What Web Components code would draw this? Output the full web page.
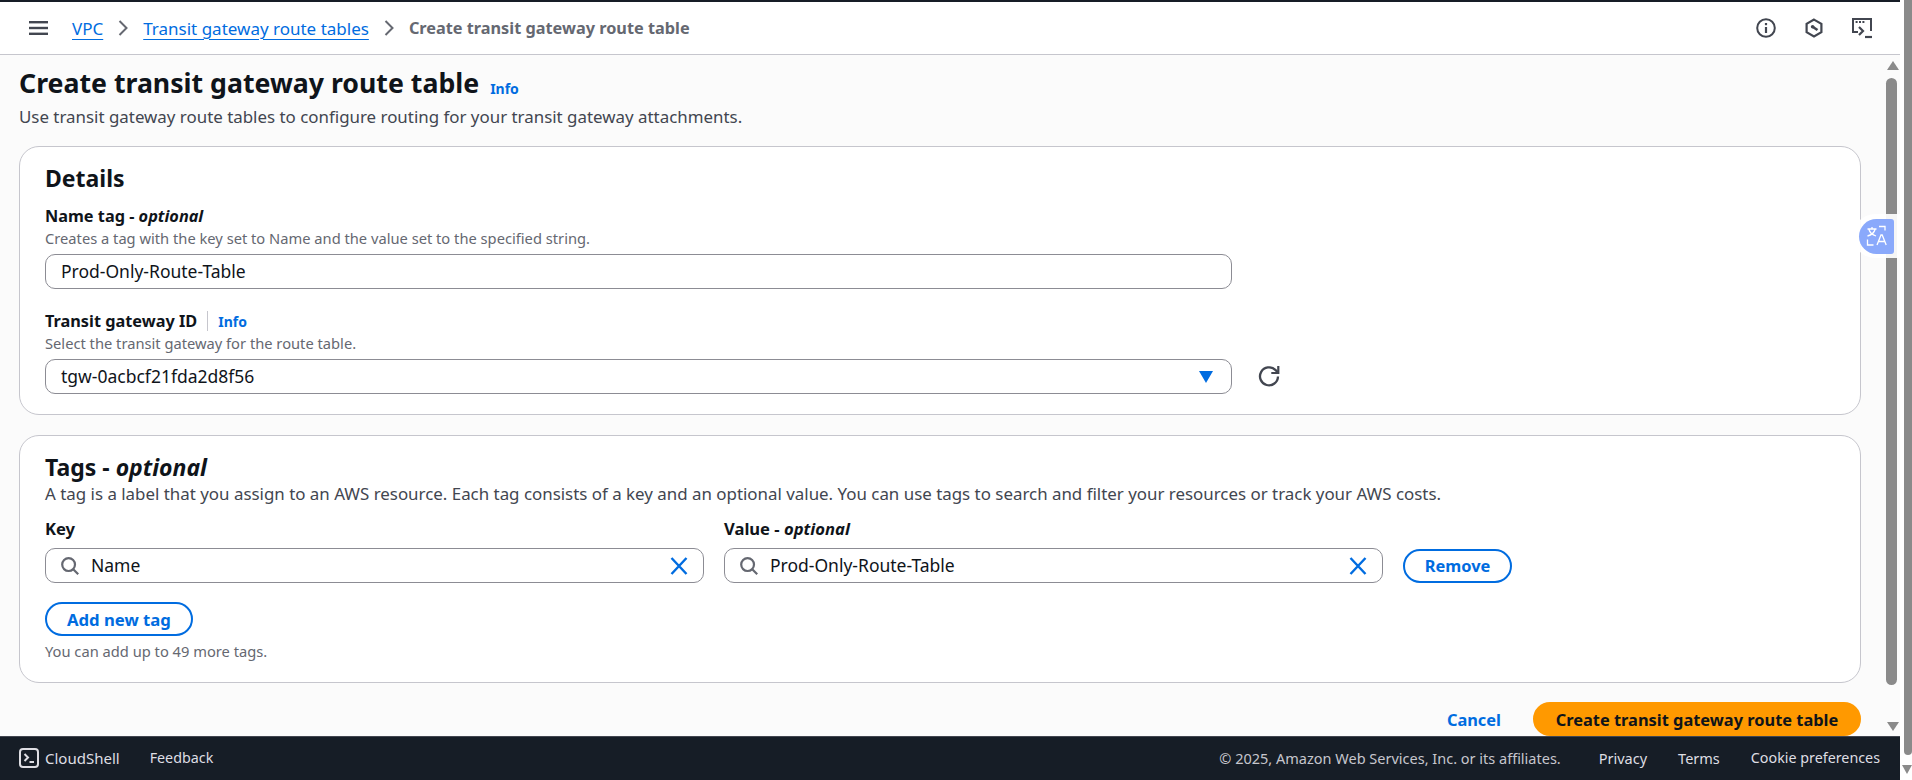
<!DOCTYPE html>
<html>
<head>
<meta charset="utf-8">
<title>Create transit gateway route table</title>
<style>
  html, body { margin: 0; height: 100%; overflow: hidden; background: #fff; }
  body {
    font-family: "Noto Sans", "Liberation Sans", sans-serif;
    font-size: 16px;
    color: #0f141a;
    display: grid;
    grid-template-columns: 1fr 12px;
    height: 780px;
  }
  app-shell { min-width: 0; }
</style>
</head>
<body>
<app-shell>
  <top-bar slot="top"></top-bar>
  <page-head></page-head>

  <form-card>
    <card-title>Details</card-title>
    <form-field label="Name tag" optional desc="Creates a tag with the key set to Name and the value set to the specified string." first>
      <text-box value="Prod-Only-Route-Table" style="width:1187px"></text-box>
    </form-field>
    <form-field label="Transit gateway ID" info desc="Select the transit gateway for the route table.">
      <div style="display:flex;align-items:center;gap:26px">
        <text-box value="tgw-0acbcf21fda2d8f56" caret style="width:1187px"></text-box>
        <svg width="22" height="22" viewBox="0 0 22 22" fill="none" stroke="#424650" stroke-width="2.3" style="margin-top:-2px">
          <path d="M20 11.500a9 9 0 1 1-2.700-6.600l2.400 2.300"/><path d="M20.300 1v7h-7" stroke-width="2.200"/>
        </svg>
      </div>
    </form-field>
  </form-card>

  <form-card second>
    <card-title>Tags - <i>optional</i></card-title>
    <card-desc>A tag is a label that you assign to an AWS resource. Each tag consists of a key and an optional value. You can use tags to search and filter your resources or track your AWS costs.</card-desc>
    <tag-row></tag-row>
    <aws-button style="margin-top:19px;font-size:16.700px">Add new tag</aws-button>
    <help-text>You can add up to 49 more tags.</help-text>
  </form-card>

  <form-actions></form-actions>
  <console-footer slot="footer"></console-footer>
  <translate-tab></translate-tab>
</app-shell>
<outer-scroll></outer-scroll>

<script>
// page frame: dark strip, breadcrumb bar, scrolling main area with its own bar, footer
class AppShell extends HTMLElement {
  constructor() {
    super()
    this.attachShadow({ mode: 'open' }).innerHTML = `
    <style>
      :host { display: flex; flex-direction: column; height: 780px; position: relative; }
      .strip { height: 2px; background: #161d26; flex: none; }
      .main { flex: 1; min-height: 0; display: flex; background: #fbfbfb; overflow: hidden; }
      .scroller { flex: 1; min-width: 0; padding: 0 24px 0 19px; }
      .bar { width: 15px; flex: none; display: flex; flex-direction: column; align-items: center; background: #fbfbfb; }
      .up { margin-top: 6px; border: 6px solid transparent; border-top: 0; border-bottom: 9px solid #8a8a8a; }
      .thumb { margin-top: 8px; width: 11px; height: 607px; border-radius: 6px; background: #8a8a8a; margin-left: -3px; }
      .down { margin-top: 37px; border: 6px solid transparent; border-bottom: 0; border-top: 9px solid #8a8a8a; }
    </style>
    <slot name="top"></slot>
    <div class="strip" style="order:-1"></div>
    <div class="main">
      <div class="scroller"><slot></slot></div>
      <div class="bar"><div class="up"></div><div class="thumb"></div><div class="down"></div></div>
    </div>
    <slot name="footer"></slot>`
  }
}

class TopBar extends HTMLElement {
  constructor() {
    super()
    this.attachShadow({ mode: 'open' }).innerHTML = `
    <style>
      :host { display: flex; align-items: center; height: 52px; background: #fff; border-bottom: 1px solid #c6c6cd; padding: 0 27px 0 29px; flex: none; font-size: 17px; }
      a { color: #006ce0; text-decoration: underline; text-underline-offset: 4px; text-decoration-thickness: 1px; }
      .menu { margin-right: 24px; display: block; }
      .chev { margin: 0 15px; display: block; }
      .cur { color: #656871; font-weight: 700; font-size: 16.300px; }
      .right { margin-left: auto; display: flex; gap: 27px; align-items: center; }
      svg { flex: none; }
    </style>
    <svg class="menu" width="19" height="14" viewBox="0 0 19 14" fill="#424650"><rect width="19" height="2.4"/><rect y="5.8" width="19" height="2.4"/><rect y="11.6" width="19" height="2.4"/></svg>
    <a>VPC</a>
    <svg class="chev" width="10" height="16" viewBox="0 0 10 16" fill="none" stroke="#656871" stroke-width="2"><path d="M1.5 1l7 7-7 7"/></svg>
    <a>Transit gateway route tables</a>
    <svg class="chev" width="10" height="16" viewBox="0 0 10 16" fill="none" stroke="#656871" stroke-width="2"><path d="M1.5 1l7 7-7 7"/></svg>
    <span class="cur">Create transit gateway route table</span>
    <div class="right">
      <svg style="margin-right:1px" width="20" height="20" viewBox="0 0 20 20" fill="none" stroke="#424650" stroke-width="2"><circle cx="10" cy="10" r="8.8"/><path d="M10 9v6" stroke-width="2.2"/><path d="M10 5v2.2" stroke-width="2.2"/></svg>
      <svg width="20" height="20" viewBox="0 0 20 20" fill="none" stroke="#424650" stroke-width="2.2"><path d="M10 1.6l7.4 4.2v8.4L10 18.4l-7.4-4.2V5.800z"/><path d="M9 9l4.5 3" stroke-width="2.6"/><circle cx="8.6" cy="8.8" r="1.8" fill="#424650" stroke="none"/></svg>
      <svg width="22" height="22" viewBox="0 0 22 22" fill="none" stroke="#424650" stroke-width="2"><path d="M7 15H2V2h18v12"/><path d="M4.6 5h2M8 5h2M11.4 5h2" stroke-width="2"/><path d="M8 10l4 4-4 4" stroke-width="2.2"/><path d="M14 20h7" stroke-width="2.2"/></svg>
    </div>`
  }
}

class PageHead extends HTMLElement {
  constructor() {
    super()
    this.attachShadow({ mode: 'open' }).innerHTML = `
    <style>
      :host { display: block; padding-top: 10px; }
      .row { display: flex; align-items: baseline; gap: 11px; }
      h1 { margin: 0; font-size: 26.700px; line-height: 36px; font-weight: 700; color: #0f141a; }
      a { font-size: 14px; font-weight: 700; color: #006ce0; transform: translateY(1px); }
      p { margin: 4px 0 0; font-size: 16.900px; line-height: 24px; color: #424650; }
    </style>
    <div class="row"><h1>Create transit gateway route table</h1><a>Info</a></div>
    <p>Use transit gateway route tables to configure routing for your transit gateway attachments.</p>`
  }
}

class FormCard extends HTMLElement {
  constructor() {
    super()
    this.attachShadow({ mode: 'open' }).innerHTML = `
    <style>
      :host { display: block; margin-top: 17px; background: #fff; border: 1px solid #c6c6cd; border-radius: 20px; padding: 17px 24px 20px 25px; }
      :host([second]) { margin-top: 20px; padding-bottom: 23px; }
    </style>
    <slot></slot>`
  }
}

class CardTitle extends HTMLElement {
  constructor() {
    super()
    this.attachShadow({ mode: 'open' }).innerHTML = `
    <style>:host { display: block; font-size: 23px; line-height: 28px; font-weight: 700; color: #0f141a; }</style>
    <slot></slot>`
  }
}

class CardDesc extends HTMLElement {
  constructor() {
    super()
    this.attachShadow({ mode: 'open' }).innerHTML = `
    <style>:host { display: block; margin-top: 2px; font-size: 16.900px; line-height: 22px; color: #424650; }</style>
    <slot></slot>`
  }
}

class HelpText extends HTMLElement {
  constructor() {
    super()
    this.attachShadow({ mode: 'open' }).innerHTML = `
    <style>:host { display: block; margin-top: 7px; font-size: 14.700px; line-height: 16px; color: #656871; }</style>
    <slot></slot>`
  }
}

class FormField extends HTMLElement {
  constructor() {
    super()
    const label = this.getAttribute('label')
    const opt = this.hasAttribute('optional') ? ' - <i>optional</i>' : ''
    const info = this.hasAttribute('info') ? '<span class="sep"></span><a>Info</a>' : ''
    this.attachShadow({ mode: 'open' }).innerHTML = `
    <style>
      :host { display: block; margin-top: 21px; }
      :host([first]) { margin-top: 13px; }
      .lab { display: flex; align-items: center; height: 22px; font-size: 16.300px; line-height: 22px; font-weight: 700; color: #0f141a; white-space: pre; }
      .sep { width: 1px; height: 20px; background: #c6c6cd; margin: 0 10px; }
      a { color: #006ce0; font-size: 14px; transform: translateY(1px); }
      .desc { margin: 2px 0 7px; font-size: 14.700px; line-height: 18px; color: #656871; }
    </style>
    <div class="lab"><span>${label}${opt}</span>${info}</div>
    <div class="desc">${this.getAttribute('desc')}</div>
    <slot></slot>`
  }
}

class TextBox extends HTMLElement {
  constructor() {
    super()
    const caret = this.hasAttribute('caret') ? '<svg class="end" width="16" height="12" viewBox="0 0 16 12" fill="#006ce0"><path d="M1 0h14L8 12z"/></svg>' : ''
    const search = this.hasAttribute('search') ? '<svg class="s" width="20" height="20" viewBox="0 0 20 20" fill="none" stroke="#656871" stroke-width="2.2"><circle cx="8.6" cy="8.6" r="6.4"/><path d="M13.2 13.2l5 5"/></svg>' : ''
    const clear = this.hasAttribute('clear') ? '<svg class="end x" width="18" height="18" viewBox="0 0 18 18" fill="none" stroke="#006ce0" stroke-width="2.4"><path d="M1.5 1l15 16M16.5 1l-15 16"/></svg>' : ''
    this.attachShadow({ mode: 'open' }).innerHTML = `
    <style>
      :host { display: flex; align-items: center; box-sizing: border-box; height: 35px; background: #fff; border: 1px solid #8c8c94; border-radius: 10px; padding: 0 17px 0 15px; font-size: 17.500px; color: #0f141a; flex: none; }
      :host([search]) { padding: 0 15px 0 14px; }
      span { margin-top: -2px; }
      .s { margin-right: 11px; }
      .end { margin-left: auto; }
      svg { flex: none; }
    </style>
    ${search}<span>${this.getAttribute('value')}</span>${caret}${clear}`
  }
}

class AwsButton extends HTMLElement {
  constructor() {
    super()
    this.attachShadow({ mode: 'open' }).innerHTML = `
    <style>
      :host { display: inline-flex; align-items: center; justify-content: center; box-sizing: border-box; height: 34px; padding: 0 20px; border: 2px solid #006ce0; border-radius: 20px; background: #fff; color: #006ce0; font-size: 16.400px; font-weight: 700; flex: none; }
      :host([primary]) { background: #ff9900; border-color: #ff9900; color: #0f141a; }
      :host([plain]) { background: none; border-color: transparent; }
    </style>
    <slot></slot>`
  }
}

class TagRow extends HTMLElement {
  constructor() {
    super()
    this.attachShadow({ mode: 'open' }).innerHTML = `
    <style>
      :host { display: grid; grid-template-columns: 659px 659px 109px; column-gap: 20px; row-gap: 8px; margin-top: 13px; align-items: center; }
      .lab { font-size: 16.600px; line-height: 22px; font-weight: 700; color: #0f141a; }
    </style>
    <div class="lab">Key</div>
    <div class="lab">Value - <i>optional</i></div>
    <div></div>
    <text-box search clear value="Name"></text-box>
    <text-box search clear value="Prod-Only-Route-Table"></text-box>
    <aws-button>Remove</aws-button>`
  }
}

class FormActions extends HTMLElement {
  constructor() {
    super()
    this.attachShadow({ mode: 'open' }).innerHTML = `
    <style>:host { display: flex; justify-content: flex-end; align-items: center; gap: 10px; margin-top: 19px; }</style>
    <aws-button plain>Cancel</aws-button>
    <aws-button primary style="width:328px">Create transit gateway route table</aws-button>`
  }
}

class ConsoleFooter extends HTMLElement {
  constructor() {
    super()
    this.attachShadow({ mode: 'open' }).innerHTML = `
    <style>
      :host { display: flex; align-items: center; flex: none; box-sizing: border-box; height: 44px; background: #161d26; border-top: 1px solid #424650; padding: 0 20px 2px 19px; color: #dedee3; font-size: 14.500px; }
      svg { margin-right: 6px; flex: none; }
      .cs { font-size: 15px; }
      .fb { margin-left: 30px; font-size: 14.300px; }
      .right { margin-left: auto; display: flex; gap: 31px; }
      .copy { margin-right: 7px; color: #c6c6cd; }
      .ck { font-size: 14.300px; }
    </style>
    <svg width="20" height="20" viewBox="0 0 20 20" fill="none" stroke="#dedee3" stroke-width="2"><rect x="1" y="1" width="18" height="18" rx="3"/><path d="M5.5 6l3.5 3.5-3.5 3.5" /><path d="M10.5 14h4.5"/></svg>
    <span class="cs">CloudShell</span>
    <span class="fb">Feedback</span>
    <div class="right">
      <span class="copy">© 2025, Amazon Web Services, Inc. or its affiliates.</span>
      <span>Privacy</span><span>Terms</span><span class="ck">Cookie preferences</span>
    </div>`
  }
}

// browser extension tab that sits over the page edge
class TranslateTab extends HTMLElement {
  constructor() {
    super()
    this.attachShadow({ mode: 'open' }).innerHTML = `
    <style>
      :host { position: absolute; left: 1853px; top: 214px; width: 47px; height: 44px; background: rgba(255,255,255,.92); border-radius: 22px 0 0 22px; display: flex; align-items: center; justify-content: flex-end; padding-right: 6px; box-sizing: border-box; }
      .b { width: 35px; height: 35px; background: #8aa9fb; border-radius: 18px 3px 3px 18px; display: flex; align-items: center; justify-content: center; }
    </style>
    <div class="b">
      <svg width="22" height="22" viewBox="0 0 22 22" fill="none" stroke="#fff" stroke-width="1.3">
        <path d="M1.5 4h9M6 2v2M3 4.5c.8 3 3.5 5.5 7 6.5M9 4.5c-.8 3-3.500 5.500-7.500 6.500"/>
        <path d="M13 1.500h6v4M1.500 14.500v5.500h6M11 20l4-10h1.200l4 10M12.500 16.500h6"/>
      </svg>
    </div>`
  }
}

class OuterScroll extends HTMLElement {
  constructor() {
    super()
    this.attachShadow({ mode: 'open' }).innerHTML = `
    <style>
      :host { display: flex; flex-direction: column; align-items: flex-end; background: #fff; height: 780px; }
      .thumb { width: 8px; height: 755px; background: #8a8a8a; border-radius: 0 0 4px 4px; }
      .down { margin: 10px 0 0; border: 5px solid transparent; border-bottom: 0; border-top: 9px solid #8a8a8a; margin-right: 0; }
    </style>
    <div class="thumb"></div><div class="down"></div>`
  }
}

customElements.define('app-shell', AppShell)
customElements.define('top-bar', TopBar)
customElements.define('page-head', PageHead)
customElements.define('form-card', FormCard)
customElements.define('card-title', CardTitle)
customElements.define('card-desc', CardDesc)
customElements.define('help-text', HelpText)
customElements.define('form-field', FormField)
customElements.define('text-box', TextBox)
customElements.define('aws-button', AwsButton)
customElements.define('tag-row', TagRow)
customElements.define('form-actions', FormActions)
customElements.define('console-footer', ConsoleFooter)
customElements.define('translate-tab', TranslateTab)
customElements.define('outer-scroll', OuterScroll)
</script>
</body>
</html>
